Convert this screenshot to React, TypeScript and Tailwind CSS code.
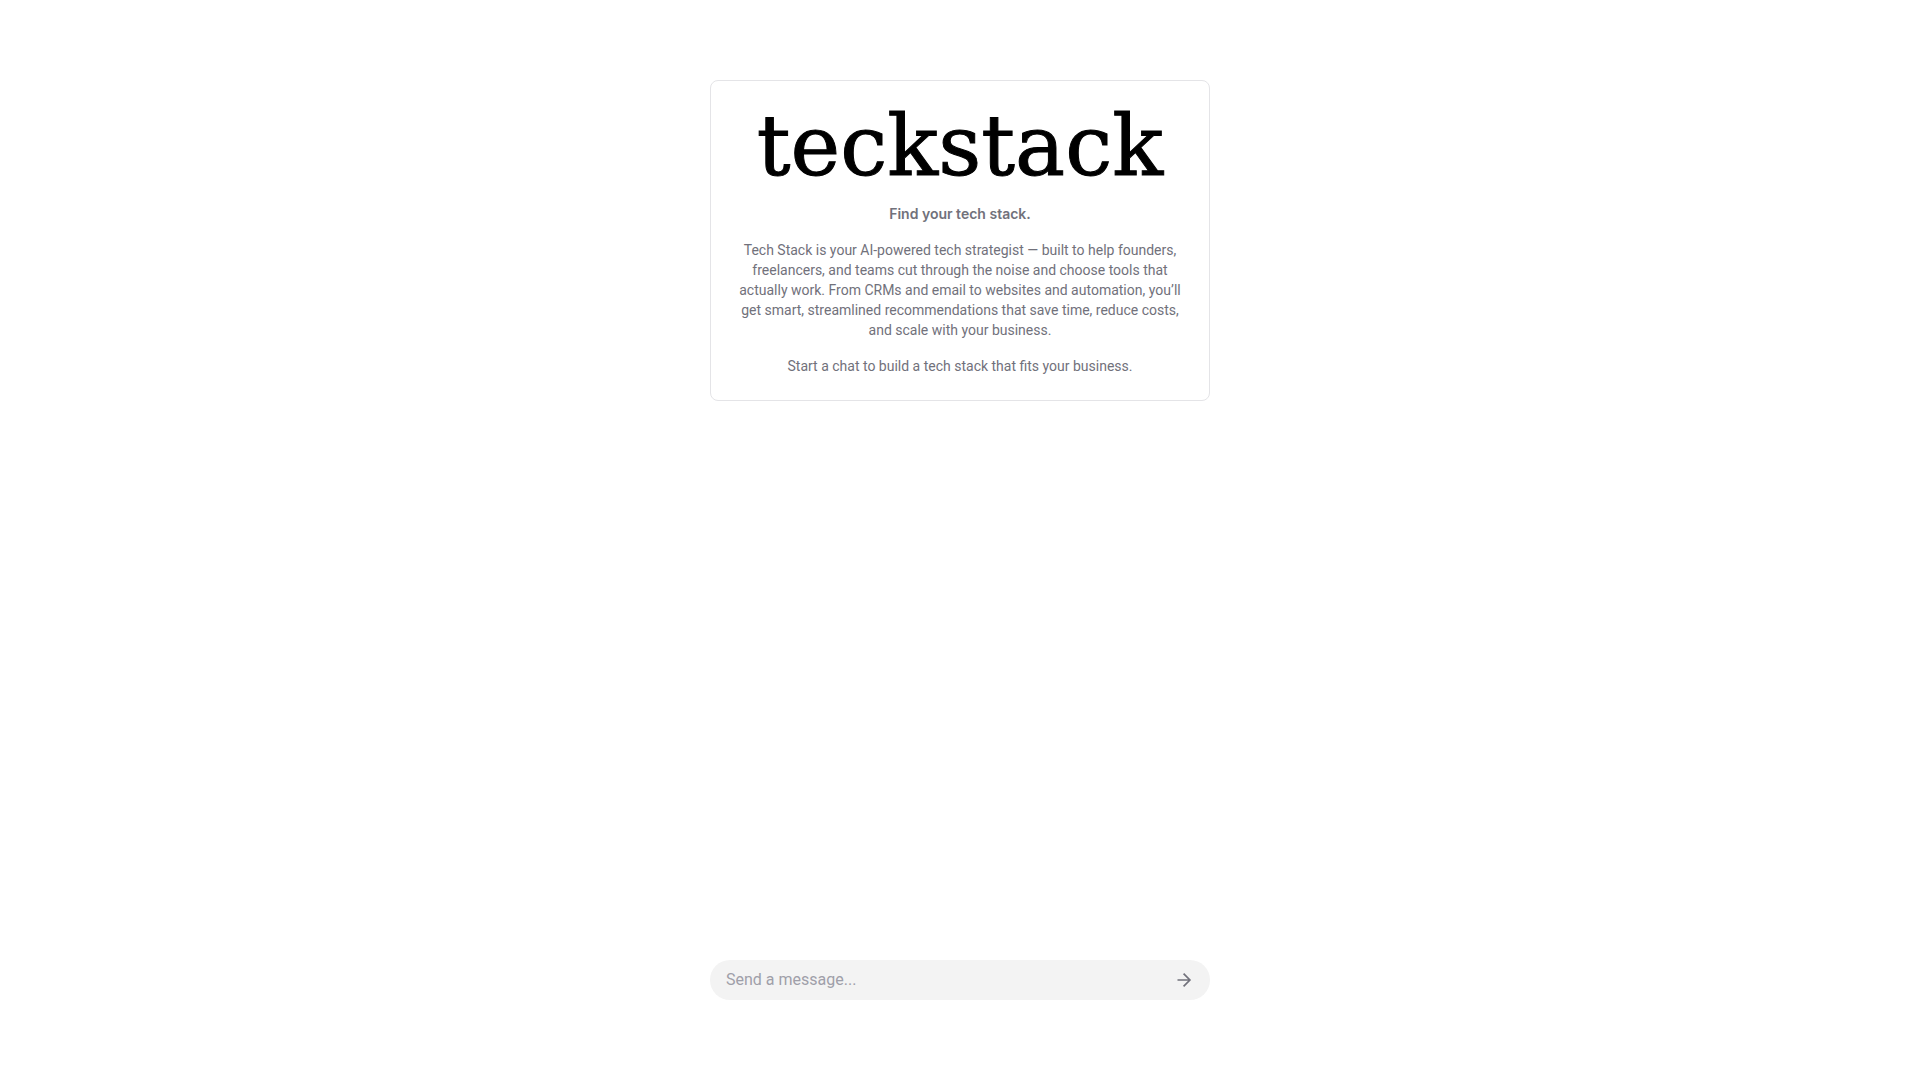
import { useState } from 'react';

export default function App() {
  const [message, setMessage] = useState('');

  return (
    <div className="flex min-h-screen flex-col items-center justify-between bg-white px-4 py-20 font-['Roboto',sans-serif]">
      {/* Intro card */}
      <main className="w-full max-w-[500px] rounded-lg border border-zinc-200 p-6 text-center text-sm text-zinc-500">
        <h1 className="font-['DejaVu_Serif',serif] text-[84px] leading-[83px] text-black [-webkit-text-stroke:1px_black]">
          teckstack
        </h1>
        <div className="mt-4 space-y-4">
          <p className="font-['Inter',sans-serif] font-semibold">Find your tech stack.</p>
          <p>
            Tech Stack is your AI-powered tech strategist — built to help founders,
            freelancers, and teams cut through the noise and choose tools that
            actually work. From CRMs and email to websites and automation, you’ll
            get smart, streamlined recommendations that save time, reduce costs,
            and scale with your business.
          </p>
          <p>Start a chat to build a tech stack that fits your business.</p>
        </div>
      </main>

      {/* Message box */}
      <form
        onSubmit={e => e.preventDefault()}
        className="flex h-10 w-full max-w-[500px] items-center rounded-full bg-[#f3f3f3] pl-4 pr-3"
      >
        <input
          type="text"
          aria-label="Send a message"
          placeholder="Send a message..."
          value={message}
          onChange={e => setMessage(e.target.value)}
          className="min-w-0 flex-1 bg-transparent text-base text-zinc-900 outline-none placeholder:text-zinc-400"
        />
        <button type="submit" aria-label="Send" className="flex h-7 w-7 items-center justify-center text-zinc-500">
          <svg width="20" height="20" viewBox="0 0 20 20" fill="none" stroke="currentColor" strokeWidth="1.7">
            <path d="M3.5 10H16M9.6 3.7l6.3 6.3-6.3 6.3" />
          </svg>
        </button>
      </form>
    </div>
  );
}
